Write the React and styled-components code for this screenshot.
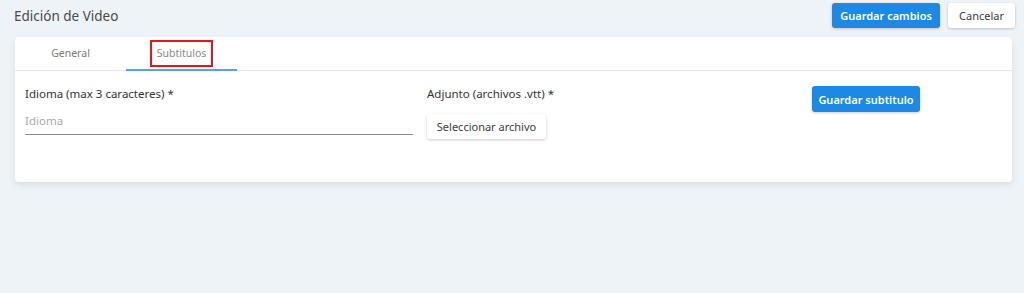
import React, { useState } from 'react';
import styled, { createGlobalStyle } from 'styled-components';

const GlobalStyle = createGlobalStyle`
  html, body {
    margin: 0;
    padding: 0;
    background: #eef3f7;
    font-family: "Noto Sans", "Open Sans", sans-serif;
  }
`;

const Page = styled.div`
  min-height: 293px;
  padding: 3px 9px 0 15px;
  box-sizing: border-box;
`;

const Header = styled.div`
  display: flex;
  align-items: center;
  height: 25px;
  margin-bottom: 9px;
`;

const Title = styled.h1`
  flex: 1;
  margin: 0 0 0 -1px;
  font-size: 13.5px;
  font-weight: 400;
  color: #4a4a4a;
`;

const Button = styled.button`
  height: ${(p) => p.$h || 25}px;
  width: ${(p) => (p.$w ? `${p.$w}px` : 'auto')};
  margin-top: ${(p) => p.$mt || 0}px;
  padding: 0 ${(p) => p.$pad ?? 11}px;
  border: none;
  border-radius: 3px;
  font-family: inherit;
  font-size: 11px;
  font-weight: ${(p) => (p.$primary ? 600 : 400)};
  white-space: nowrap;
  color: ${(p) => (p.$primary ? '#ffffff' : '#3c3c3c')};
  background: ${(p) => (p.$primary ? '#1e88e5' : '#ffffff')};
  box-shadow: 0 1px 3px rgba(0, 0, 0, 0.2);
  cursor: pointer;
`;

const Actions = styled.div`
  display: flex;
  gap: 8px;
`;

const Card = styled.div`
  width: 997px;
  height: 145px;
  background: #ffffff;
  border-radius: 4px;
  box-shadow: 0 3px 6px rgba(60, 80, 100, 0.12);
`;

const Tabs = styled.div`
  display: flex;
  height: 33px;
  border-bottom: 1px solid #e6e9ec;
`;

const Tab = styled.div`
  width: 111px;
  display: flex;
  align-items: center;
  justify-content: center;
  font-size: 10.5px;
  color: #7a7a7a;
  border-bottom: 2px solid ${(p) => (p.$active ? '#5b9fe6' : 'transparent')};
  margin-bottom: -1px;
  box-sizing: border-box;
  cursor: pointer;
`;

const Highlight = styled.span`
  border: 2px solid #e8141a;
  padding: 4px 5px 5px;
  margin-top: 1px;
  color: #8a8a8a;
`;

const Form = styled.div`
  display: grid;
  grid-template-columns: 388px 371px 108px;
  column-gap: 14px;
  padding: 14px 10px 0 10px;
`;

const Field = styled.div`
  display: flex;
  flex-direction: column;
  align-items: flex-start;
`;

const Label = styled.label`
  font-size: 11.5px;
  color: #333;
  line-height: 18px;
  margin-bottom: ${(p) => p.$gap}px;
`;

const Input = styled.input`
  width: 100%;
  border: none;
  border-bottom: 1px solid #8a8a8a;
  padding: 0 0 6px;
  font-family: inherit;
  font-size: 11.5px;
  color: #333;
  outline: none;
  background: transparent;
  &::placeholder {
    color: #a9a9a9;
  }
`;

export default function App() {
  const [tab, setTab] = useState(1);
  const [idioma, setIdioma] = useState('');

  return (
    <>
      <GlobalStyle />
      <Page>
        <Header>
          <Title>Edición de Video</Title>
          <Actions>
            <Button $primary $w={108} $pad={0}>Guardar cambios</Button>
            <Button $pad={11}>Cancelar</Button>
          </Actions>
        </Header>
        <Card>
          <Tabs>
            <Tab $active={tab === 0} onClick={() => setTab(0)}>General</Tab>
            <Tab $active={tab === 1} onClick={() => setTab(1)}>
              <Highlight>Subtitulos</Highlight>
            </Tab>
          </Tabs>
          <Form>
            <Field>
              <Label $gap={10}>Idioma (max 3 caracteres) *</Label>
              <Input
                placeholder="Idioma"
                maxLength={3}
                value={idioma}
                onChange={(e) => setIdioma(e.target.value)}
              />
            </Field>
            <Field>
              <Label $gap={11}>Adjunto (archivos .vtt) *</Label>
              <Button $w={119} $pad={0}>Seleccionar archivo</Button>
            </Field>
            <Field>
              <Button $primary $w={108} $pad={0} $h={26} $mt={1}>Guardar subtitulo</Button>
            </Field>
          </Form>
        </Card>
      </Page>
    </>
  );
}
